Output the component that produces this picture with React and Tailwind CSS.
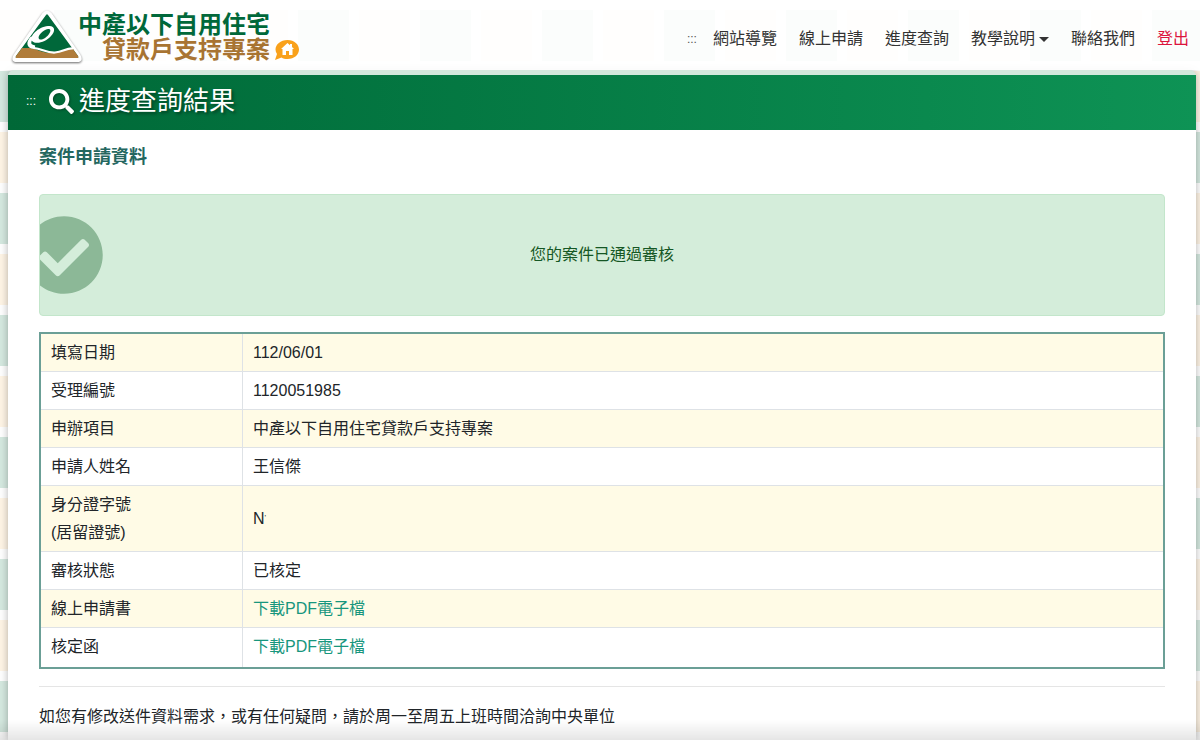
import React from 'react';
import { FaSearch, FaCheckCircle } from 'react-icons/fa';

const navLinks = ['網站導覽', '線上申請', '進度查詢'];

const rows = [
    { label: '填寫日期', value: '112/06/01' },
    { label: '受理編號', value: '1120051985' },
    { label: '申辦項目', value: '中產以下自用住宅貸款戶支持專案' },
    { label: '申請人姓名', value: '王信傑' },
    { label: <>身分證字號<br />(居留證號)</>, value: <>N<sup className="text-[8px]">'</sup></> },
    { label: '審核狀態', value: '已核定' },
    { label: '線上申請書', value: '下載PDF電子檔', href: '#application' },
    { label: '核定函', value: '下載PDF電子檔', href: '#approval' },
];

// Checkered page backdrop
const Backdrop = () => (
    <svg className="absolute inset-0 w-full h-full" aria-hidden="true">
        <defs>
            <pattern id="tiles" x="54" y="10" width="122" height="122" patternUnits="userSpaceOnUse">
                <rect x="0" y="0" width="51" height="51" fill="#d5e9e0" />
                <rect x="61" y="0" width="51" height="51" fill="#fff5e6" />
                <rect x="0" y="61" width="51" height="51" fill="#fff5e6" />
                <rect x="61" y="61" width="51" height="51" fill="#d5e9e0" />
            </pattern>
        </defs>
        <rect width="100%" height="100%" fill="url(#tiles)" />
    </svg>
);

const Emblem = () => (
    <svg width="70" height="54" viewBox="0 0 70 54" className="drop-shadow-[0_1px_1px_rgba(0,0,0,0.6)]" aria-hidden="true">
        <path d="M30.500 3Q35 -2 39.500 3L68.500 45Q72 52 65 52H5Q-2 52 1.500 45Z" fill="#fff" />
        <path d="M34 5Q35 3.500 36 5L66 46Q67 48 65 48H5Q3 48 4 46Z" fill="#00683a" />
        <path d="M10 38H17C23 38 31 44 42 43C49 42 54 39 61 39L66 46Q67 48 65 48H5Q3 48 4 46Z" fill="#b07c3a" />
        <path d="M20 27C15 32 15 37 22 38C30 39 35 43 43 42.500C51 42 54 38 61 38.500" fill="none" stroke="#fff" strokeWidth="2.200" />
        <path d="M20 28C17 31 16 36 23 37" fill="none" stroke="#fff" strokeWidth="3" />
        <path fillRule="evenodd" d="M36 16C43 15 44 21 39 26C34 32 24 35 20 31C17 26 26 17 36 16ZM36 19C31 20 25 26 27 29C30 31 35 27 37 24C39 21 39 19 36 19Z" fill="#fff" />
    </svg>
);

const HomeBubble = () => (
    <svg width="26" height="22" viewBox="0 0 26 22" aria-hidden="true">
        <path d="M13.5 1C20.5 1 25 5.500 25 10.500S20.500 20 13.500 20C11 20 9 19.500 7.500 18.500L1 21L3 15C2 13.500 1.500 12 1.500 10.500C1.500 5.500 6.500 1 13.500 1Z" fill="#f9a11b" />
        <path d="M13.500 4L16 6.300V5H18V8L20 10H18.500V16H15V12H12V16H8.500V10H7Z" fill="#fff" />
    </svg>
);

const Header = () => (
    <header className="relative z-10 flex items-center justify-between h-[70px] pl-3 bg-white/90">
        <a href="#home" className="flex items-center pt-1">
            <Emblem />
            <span className="flex flex-col -ml-1 text-2xl leading-[25px] font-bold">
                <span className="text-[#00683a]">中產以下自用住宅</span>
                <span className="flex items-center gap-1 pl-6 text-[#a87432]">
                    貸款戶支持專案
                    <HomeBubble />
                </span>
            </span>
        </a>
        <nav className="flex items-center pt-2 text-[#333]">
            <a href="#top" className="px-[5px] text-xs text-[#555]">:::</a>
            {navLinks.map((name) => (
                <a key={name} href={`#${name}`} className="px-[11px] hover:text-[#00683a]">{name}</a>
            ))}
            <button type="button" className="flex items-center gap-1 px-[11px]">
                教學說明
                <span className="border-x-5 border-t-5 border-x-transparent border-t-[#333]"></span>
            </button>
            <a href="#contact" className="px-[11px] hover:text-[#00683a]">聯絡我們</a>
            <a href="#logout" className="px-[11px] text-[#dc143c]">登出</a>
        </nav>
    </header>
);

const CaseTable = () => (
    <table className="w-full mt-4 border-2 border-[#6b9f96] border-separate border-spacing-0 leading-7 text-[#212529]">
        <tbody>
            {rows.map((row, i) => (
                <tr key={i} className="group odd:bg-[#fffbe6]">
                    <th scope="row" className="w-[202px] pt-[5px] pb-1 px-[10px] text-left font-normal border-r border-b border-[#dee2e6] group-last:border-b-0 group-last:pb-[6px]">
                        {row.label}
                    </th>
                    <td className="pt-[5px] pb-1 px-[10px] border-b border-[#dee2e6] group-last:border-b-0 group-last:pb-[6px]">
                        {row.href ? <a href={row.href} className="text-[#17967d] hover:underline">{row.value}</a> : row.value}
                    </td>
                </tr>
            ))}
        </tbody>
    </table>
);

const App = () => {
    return (
        <div className="relative flex flex-col min-h-screen bg-white font-['Liberation_Sans','Noto_Sans_CJK_TC',sans-serif] text-base">
            <Backdrop />
            <Header />
            <main className="relative flex-1 ml-2 mr-1 rounded-t-md border-t-5 border-[#d3e8dc] bg-white shadow-[0_0_8px_rgba(0,0,0,0.3)]">
                <div className="flex items-center h-[55px] pl-[18px] bg-linear-to-r from-[#006837] to-[#0e9355] text-white">
                    <a href="#content" className="pb-1 text-xs">:::</a>
                    <h1 className="flex items-center gap-[5px] ml-[13px] pb-[3px] text-[26px] leading-8 text-shadow-[2px_2px_3px_rgba(0,0,0,0.4)]">
                        <FaSearch className="drop-shadow-[1px_1px_1px_rgba(0,0,0,0.3)]" size={25} />
                        進度查詢結果
                    </h1>
                </div>
                <div className="px-[31px] pt-[13px]">
                    <h2 className="text-lg leading-7 font-bold text-[#24675f]">案件申請資料</h2>
                    <div role="alert" className="relative flex items-center justify-center h-[122px] mt-[23px] overflow-hidden rounded border border-[#c3e6cb] bg-[#d4edda] text-[#155724]">
                        <FaCheckCircle className="absolute -left-4 text-[#8cb897]" size={80} />
                        您的案件已通過審核
                    </div>
                    <CaseTable />
                    <hr className="mt-[17px] border-[#e5e5e5]" />
                    <p className="mt-4 leading-7 text-[#212529]">如您有修改送件資料需求，或有任何疑問，請於周一至周五上班時間洽詢中央單位</p>
                </div>
            </main>
            <div className="fixed inset-x-0 bottom-0 h-5 bg-linear-to-b from-transparent to-black/10 pointer-events-none"></div>
        </div>
    );
};

export default App;
